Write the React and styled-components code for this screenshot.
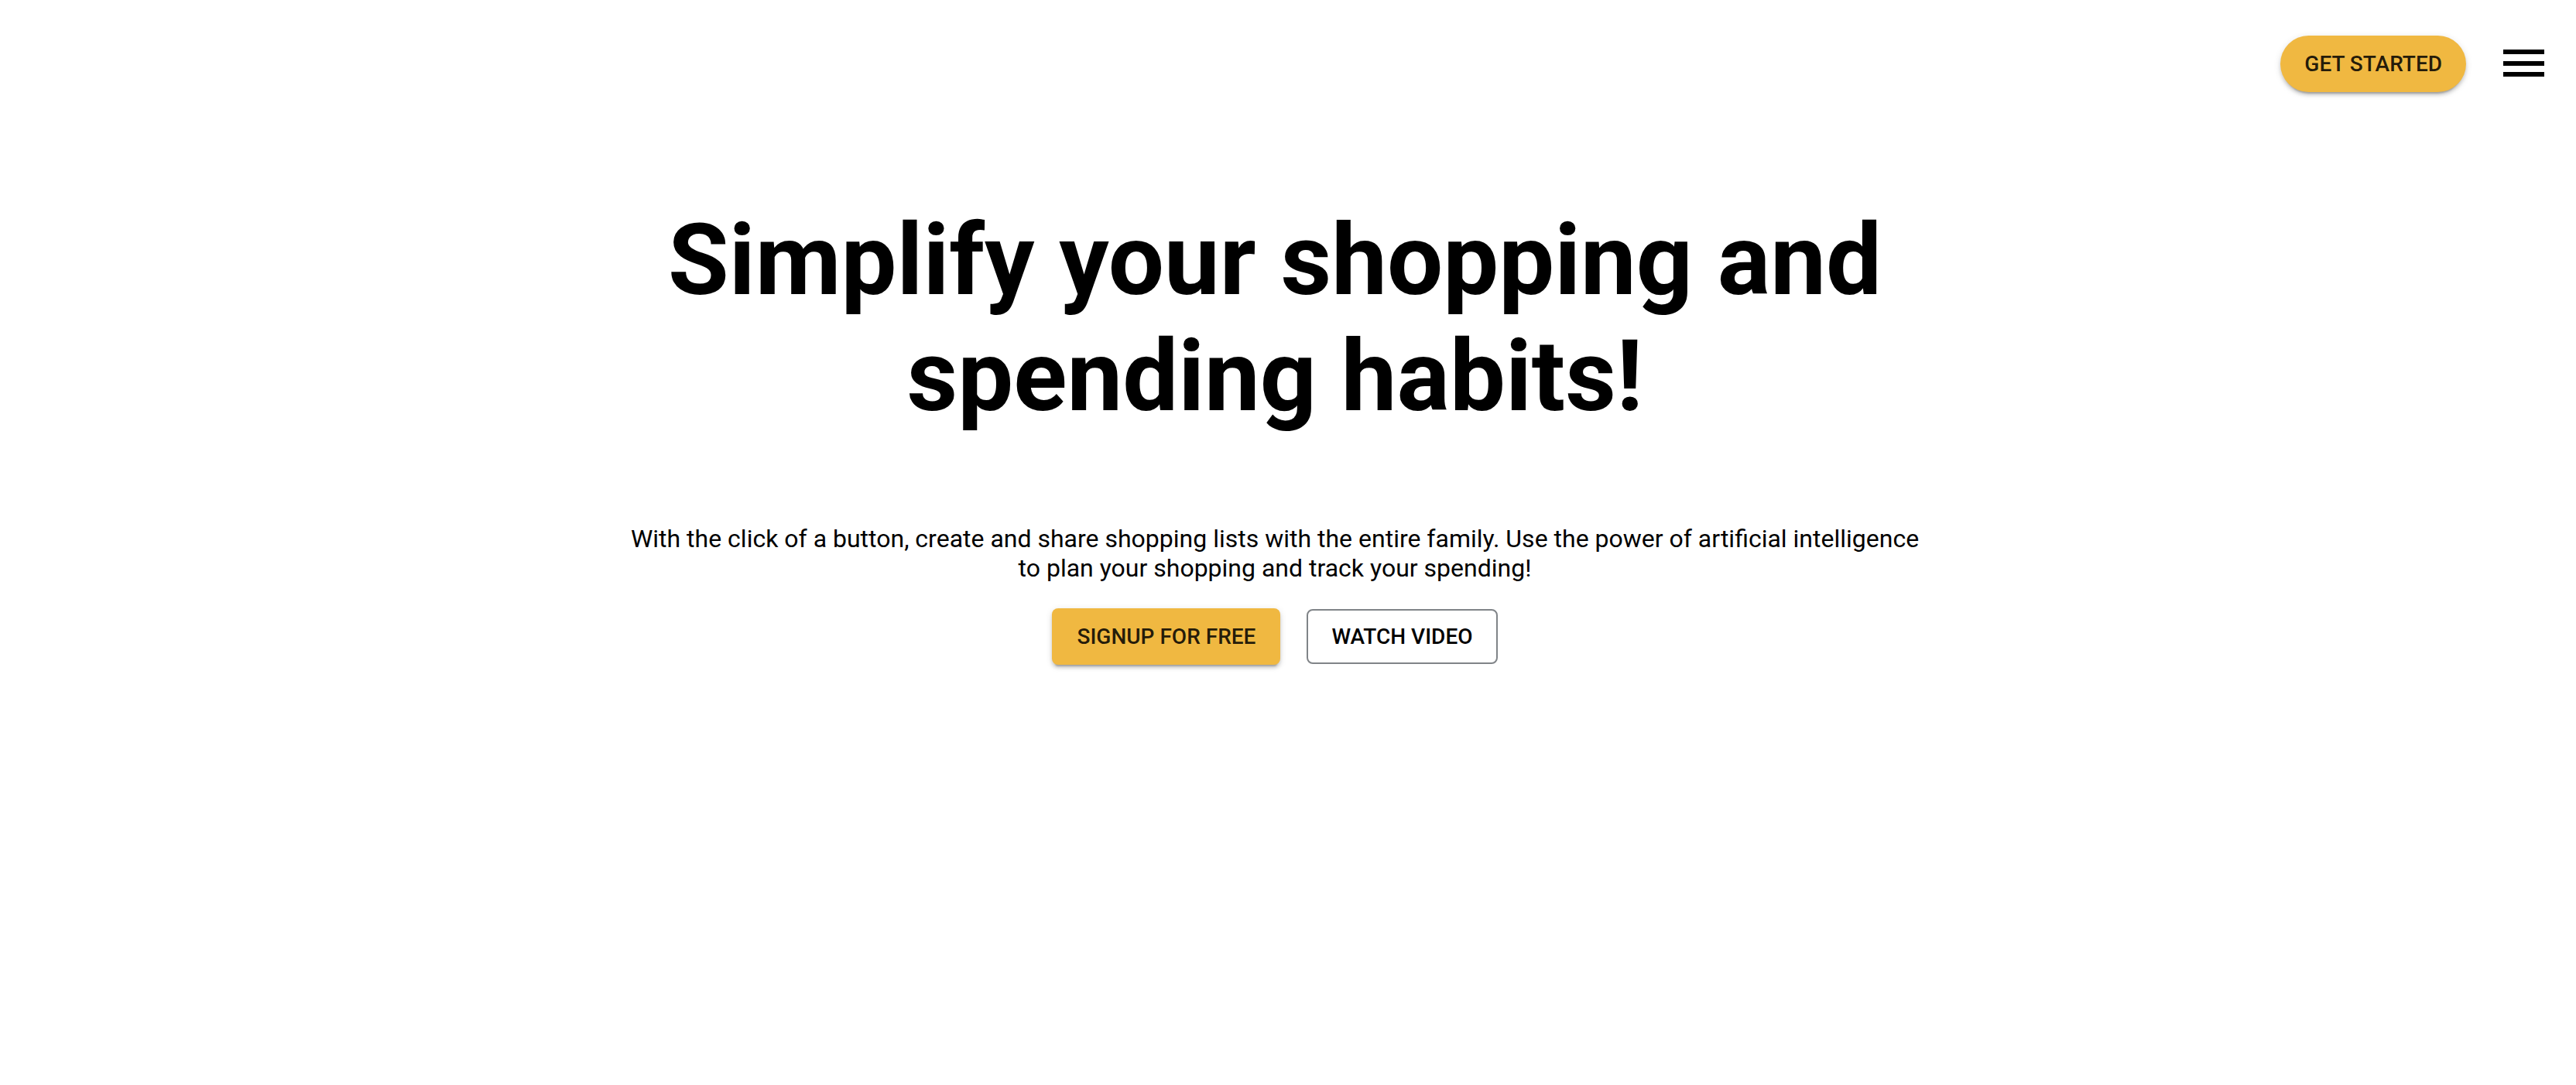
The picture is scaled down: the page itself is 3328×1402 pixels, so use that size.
import React from "react";
import styled, { createGlobalStyle } from "styled-components";

const Global = createGlobalStyle`
  html, body { margin: 0; padding: 0; background: #fff; }
  body { font-family: Roboto, "Liberation Sans", sans-serif; color: #000; }
  * { box-sizing: border-box; }
`;

const Page = styled.div`
  width: 100%;
  min-height: 1402px;
  display: flex;
  flex-direction: column;
`;

const Header = styled.header`
  display: flex;
  justify-content: flex-end;
  align-items: center;
  padding: 46px 41px 0 0;
  gap: 48px;
`;

const PillButton = styled.button`
  height: 73px;
  padding: 0 31px;
  border: none;
  border-radius: 37px;
  background: #f0b841;
  color: rgba(0, 0, 0, 0.87);
  font-family: Roboto, "Liberation Sans", sans-serif;
  font-weight: 500;
  font-size: 28px;
  letter-spacing: 0;
  text-transform: uppercase;
  box-shadow: 0 6px 2px -4px rgba(0,0,0,0.2), 0 4px 4px 0 rgba(0,0,0,0.14), 0 2px 10px 0 rgba(0,0,0,0.12);
  cursor: pointer;
`;

const Burger = styled.button`
  width: 53px;
  height: 35px;
  padding: 0;
  border: none;
  background: transparent;
  display: flex;
  flex-direction: column;
  justify-content: space-between;
  margin-top: -2px;
  cursor: pointer;
`;

const Bar = styled.span`
  display: block;
  width: 53px;
  height: 6px;
  background: #000;
`;

const Hero = styled.main`
  display: flex;
  flex-direction: column;
  align-items: center;
  padding: 142px 34px 0 0;
  text-align: center;
`;

const Title = styled.h1`
  margin: 0;
  font-family: Roboto, "Liberation Sans", sans-serif;
  font-weight: 700;
  font-size: 128px;
  line-height: 150px;
  letter-spacing: 0;
  max-width: 1700px;
`;

const Lead = styled.p`
  margin: 116px 0 0;
  font-family: Roboto, "Liberation Sans", sans-serif;
  font-weight: 400;
  font-size: 32px;
  line-height: 38px;
  max-width: 1800px;
`;

const Actions = styled.div`
  display: flex;
  gap: 34px;
  margin-top: 33px;
  align-items: center;
`;

const ActionButton = styled.button`
  height: ${(p) => (p.$outlined ? "71px" : "73px")};
  padding: 0 ${(p) => (p.$outlined ? "30px" : "32px")};
  border-radius: 8px;
  font-family: Roboto, "Liberation Sans", sans-serif;
  font-weight: 500;
  font-size: 28px;
  letter-spacing: 0;
  text-transform: uppercase;
  cursor: pointer;
  color: ${(p) => (p.$outlined ? "#000" : "rgba(0,0,0,0.87)")};
  background: ${(p) => (p.$outlined ? "#fff" : "#f0b841")};
  border: ${(p) => (p.$outlined ? "2px solid #808488" : "none")};
  box-shadow: ${(p) =>
    p.$outlined
      ? "none"
      : "0 6px 2px -4px rgba(0,0,0,0.2), 0 4px 4px 0 rgba(0,0,0,0.14), 0 2px 10px 0 rgba(0,0,0,0.12)"};
`;

export default function App() {
  return (
    <>
      <Global />
      <Page>
        <Header>
          <PillButton>Get Started</PillButton>
          <Burger aria-label="menu">
            <Bar />
            <Bar />
            <Bar />
          </Burger>
        </Header>
        <Hero>
          <Title>
            Simplify your shopping and
            <br />
            spending habits!
          </Title>
          <Lead>
            With the click of a button, create and share shopping lists with the entire family. Use the power of artificial intelligence
            <br />
            to plan your shopping and track your spending!
          </Lead>
          <Actions>
            <ActionButton>Signup for free</ActionButton>
            <ActionButton $outlined>Watch video</ActionButton>
          </Actions>
        </Hero>
      </Page>
    </>
  );
}
